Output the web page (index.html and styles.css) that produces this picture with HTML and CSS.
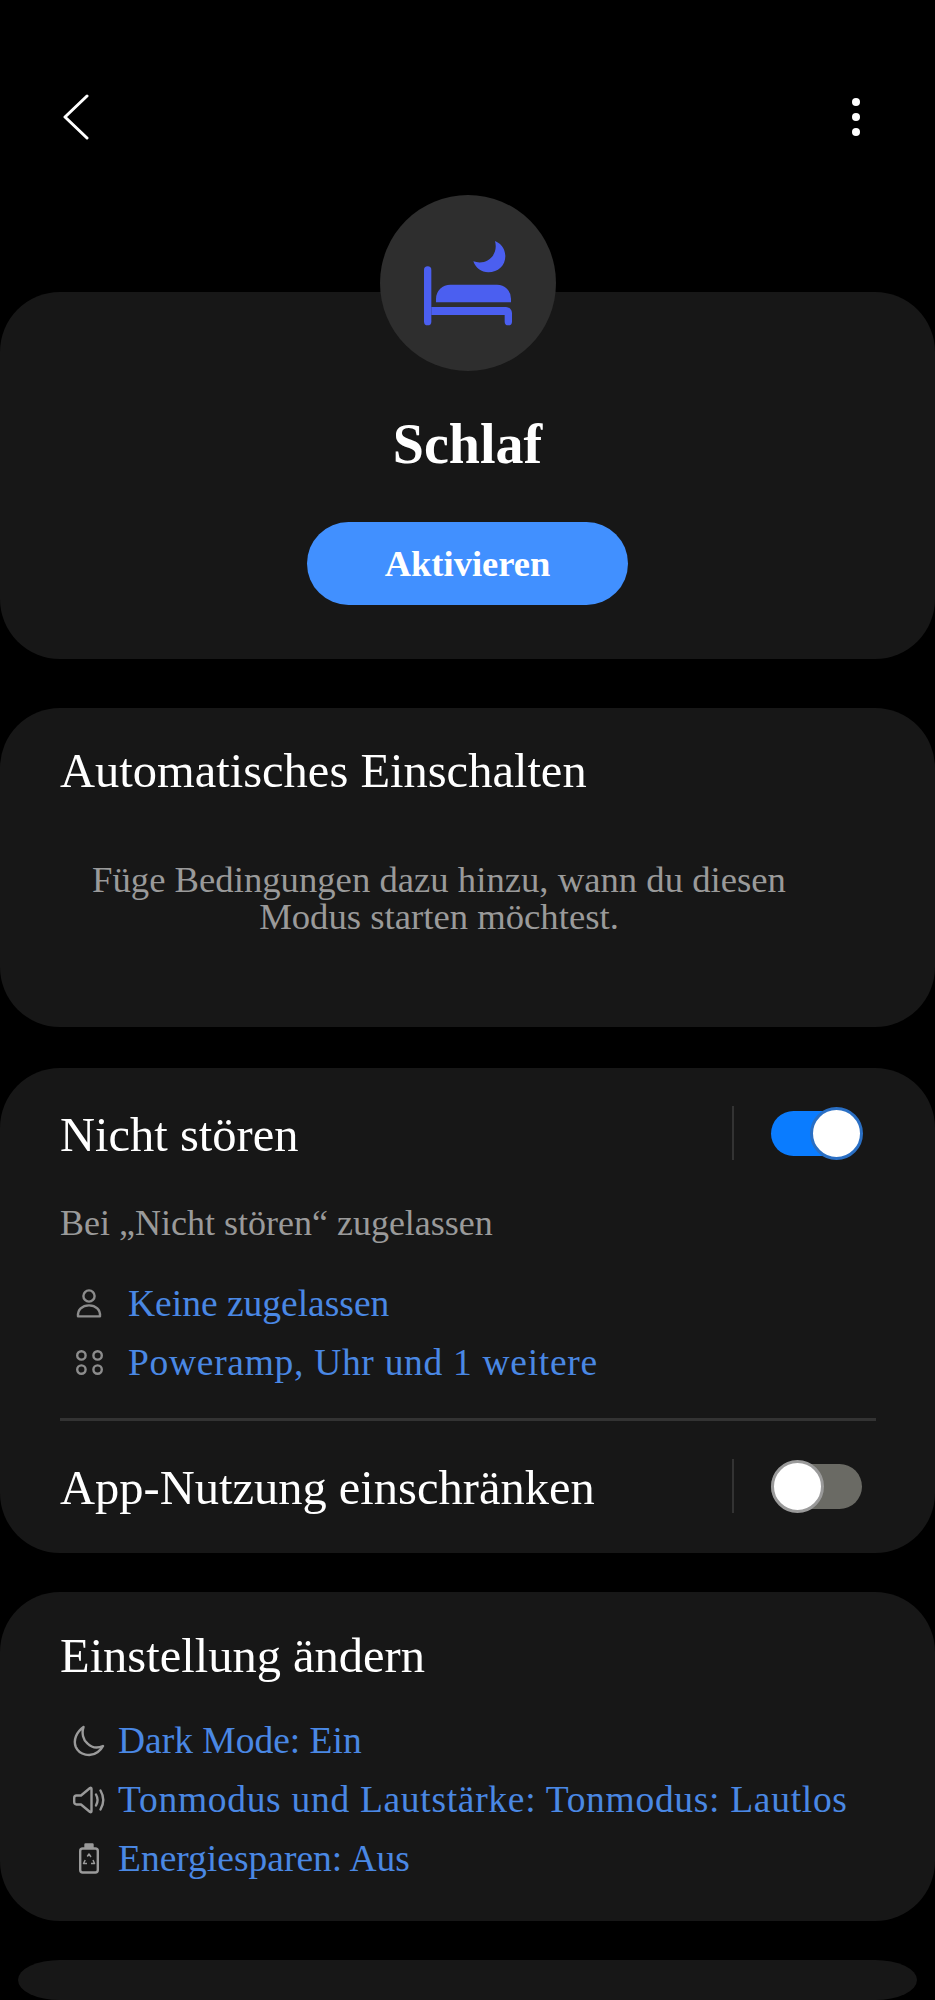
FILE: index.html
```html
<!DOCTYPE html>
<html lang="de">
<head>
    <meta charset="UTF-8">
    <meta name="viewport" content="width=device-width, initial-scale=1.0">
    <title>Schlaf</title>
    <link rel="stylesheet" href="styles.css">
</head>
<body>
    <header class="topbar">
        <svg class="back" width="26" height="46" viewBox="0 0 26 46"><path d="M24 2 2 23l22 21" fill="none" stroke="#fff" stroke-width="3" stroke-linecap="round" stroke-linejoin="round"/></svg>
        <div class="more"><span></span><span></span><span></span></div>
    </header>

    <section class="card hero">
        <div class="mode-icon">
            <svg width="88" height="85" viewBox="0 0 264 255" fill="#4b5ff0">
                <path d="M213 0C238 10 244 32 244 46 244 74 222 94 193 94 172 94 155 81 148 61 185 75 225 45 213 0Z"/>
                <rect x="0" y="76" width="22" height="177" rx="11"/>
                <path d="M36 184v-10a43 43 0 0 1 43-43h140a42 42 0 0 1 42 42v11Z"/>
                <path d="M22 198h224a18 18 0 0 1 18 18v26a11 11 0 0 1-22 0v-20H22Z"/>
            </svg>
        </div>
        <h1>Schlaf</h1>
        <button class="activate" type="button">Aktivieren</button>
    </section>

    <section class="card auto">
        <h2>Automatisches Einschalten</h2>
        <p class="hint">Füge Bedingungen dazu hinzu, wann du diesen<br>Modus starten möchtest.</p>
    </section>

    <section class="card dnd">
        <div class="switch-row">
            <h2>Nicht stören</h2>
            <div class="divider"></div>
            <div class="toggle on"></div>
        </div>
        <p class="sub">Bei „Nicht stören“ zugelassen</p>
        <ul class="links wide">
            <li>
                <span class="ico"><svg width="26" height="29" viewBox="0 0 26 29" fill="none" stroke="#8c8c8c" stroke-width="2.4"><circle cx="13" cy="7" r="5.6"/><path d="M2 27.4c-.6-6.5 4.2-11 11-11s11.600 4.500 11 11Z" stroke-linejoin="round"/></svg></span>
                <span>Keine zugelassen</span>
            </li>
            <li>
                <span class="ico"><svg width="27" height="25" viewBox="0 0 27 25" fill="none" stroke="#8c8c8c" stroke-width="2.4"><circle cx="5.4" cy="5.4" r="4.2"/><circle cx="21.600" cy="5.400" r="4.200"/><circle cx="5.400" cy="19.600" r="4.200"/><circle cx="21.600" cy="19.600" r="4.200"/></svg></span>
                <span class="stretched">Poweramp, Uhr und 1 weitere</span>
            </li>
        </ul>
        <hr class="line">
        <div class="switch-row">
            <h2>App-Nutzung einschränken</h2>
            <div class="divider"></div>
            <div class="toggle"></div>
        </div>
    </section>

    <section class="card change">
        <h2>Einstellung ändern</h2>
        <ul class="links">
            <li>
                <span class="ico"><svg width="32" height="32" viewBox="0 0 32 32" fill="none" stroke="#9a9a9a" stroke-width="2.4" stroke-linejoin="round"><path d="M10.500 2C3.500 7 0 15 2.800 22c3.500 8 15 10.500 22 5 2-1.500 4-3.500 5.200-6-5.500 2.500-11.500 1.500-15.500-2.500C10 15 8.500 8 10.500 2Z"/></svg></span>
                <span>Dark Mode: Ein</span>
            </li>
            <li>
                <span class="ico"><svg width="32" height="28" viewBox="0 0 32 28" fill="none" stroke="#9a9a9a" stroke-width="2.4" stroke-linecap="round" stroke-linejoin="round"><path d="M3.500 9.500h4.500L17 2c1-.6 1.500 0 1.500 1v22c0 1-.5 1.600-1.500 1l-9-7.500H3.500C2 18.500 1.200 17.500 1.200 16v-4c0-1.500.8-2.500 2.300-2.500Z"/><path d="M23 8.500c2 3.500 2 7.500 0 11"/><path d="M27.500 4.500c3.500 6 3.500 13 0 19"/></svg></span>
                <span class="stretched">Tonmodus und Lautstärke: Tonmodus: Lautlos</span>
            </li>
            <li>
                <span class="ico"><svg width="20" height="31" viewBox="0 0 20 31" fill="none" stroke="#9a9a9a" stroke-width="2.4" stroke-linejoin="round"><rect x="1.200" y="5.500" width="17.600" height="24" rx="2.500"/><path d="M6.500 5V1.500h7V5" fill="#9a9a9a"/><path d="M8.300 13.500 10 11l2 3M14 17l1.500 3.500h-3.500M8 20.500H4.500L6.200 17" stroke-width="1.500"/></svg></span>
                <span>Energiesparen: Aus</span>
            </li>
        </ul>
    </section>

    <section class="card last"></section>
</body>
</html>
```
FILE: styles.css
```css
html, body {
    height: 2000px;
    overflow: hidden;
}

body {
    margin: 0;
    background-color: #000;
    font-family: "Liberation Serif", serif;
    color: #fff;
}

h1, h2, p, ul {
    margin: 0;
    padding: 0;
    font-weight: normal;
}

.topbar {
    height: 292px;
    box-sizing: border-box;
    padding: 94px 75px 0 63px;
    display: flex;
    justify-content: space-between;
    align-items: flex-start;
}

.more {
    display: flex;
    flex-direction: column;
    gap: 7px;
    padding-top: 4px;
}

.more span {
    width: 8px;
    height: 8px;
    border-radius: 50%;
    background-color: #fff;
}

.card {
    background-color: #171717;
    border-radius: 60px;
    position: relative;
}

h2 {
    font-size: 48.500px;
    line-height: 56px;
}

/* top card */
.hero {
    height: 367px;
    display: flex;
    flex-direction: column;
    align-items: center;
    margin-bottom: 49px;
}

.mode-icon {
    position: absolute;
    top: -97px;
    left: 380px;
    width: 176px;
    height: 176px;
    border-radius: 50%;
    background-color: #2e2e2e;
    display: flex;
    align-items: center;
    justify-content: center;
}

.hero h1 {
    margin-top: 121px;
    font-size: 56px;
    line-height: 62px;
    font-weight: bold;
}

.activate {
    margin-top: 47px;
    width: 321px;
    height: 83px;
    border: none;
    border-radius: 42px;
    background-color: #4190ff;
    color: #fff;
    font-family: inherit;
    font-size: 36.500px;
    font-weight: bold;
}

/* auto on */
.auto {
    height: 319px;
    box-sizing: border-box;
    padding: 35px 117px 0 60px;
    margin-bottom: 41px;
}

.hint {
    margin-top: 62px;
    text-align: center;
    font-size: 36.700px;
    line-height: 37px;
    color: #9a9a9a;
}

/* do not disturb */
.dnd {
    height: 485px;
    box-sizing: border-box;
    padding: 37px 59px 0 60px;
    margin-bottom: 39px;
}

.switch-row {
    display: flex;
    align-items: center;
    height: 56px;
}

.switch-row h2 {
    flex: 1;
    margin-top: 4px;
}

.divider {
    width: 2px;
    height: 54px;
    background-color: #333;
    margin-right: 37px;
}

.toggle {
    width: 91px;
    height: 45px;
    margin-right: 14px;
    border-radius: 23px;
    background-color: #6a6a64;
    position: relative;
}

.toggle::after {
    content: "";
    position: absolute;
    top: -4px;
    left: 0;
    width: 47px;
    height: 47px;
    border: 3px solid #9a9a9a;
    border-radius: 50%;
    background-color: #fff;
}

.toggle.on {
    background-color: #0a7cff;
}

.toggle.on::after {
    left: auto;
    right: -1px;
    border-color: #2a6fc4;
}

.sub {
    margin-top: 41px;
    font-size: 36px;
    line-height: 42px;
    color: #9a9a9a;
}

.links {
    list-style: none;
    margin-top: 30px;
    font-size: 37.500px;
    color: #4a88e4;
}

.links li {
    display: flex;
    align-items: center;
    height: 59px;
}

.stretched {
    letter-spacing: 0.7px;
}

.links.wide li {
    padding-left: 15px;
    gap: 25px;
}

.links.wide .ico {
    width: 28px;
    margin: 0;
}

.line {
    margin: 26px 0 0;
    border: none;
    height: 3px;
    background-color: #333;
}

.dnd .line + .switch-row {
    margin-top: 37px;
}

/* change settings */
.change {
    height: 329px;
    box-sizing: border-box;
    padding: 36px 60px 0;
    margin-bottom: 39px;
}

.change .links {
    margin-top: 27px;
}

.ico {
    width: 32px;
    margin: 0 13px;
    display: flex;
    justify-content: center;
}

/* next card, cut by the rounded screen corners */
.last {
    height: 40px;
    margin: 0 18px;
    border-radius: 42px / 20px;
}
```
